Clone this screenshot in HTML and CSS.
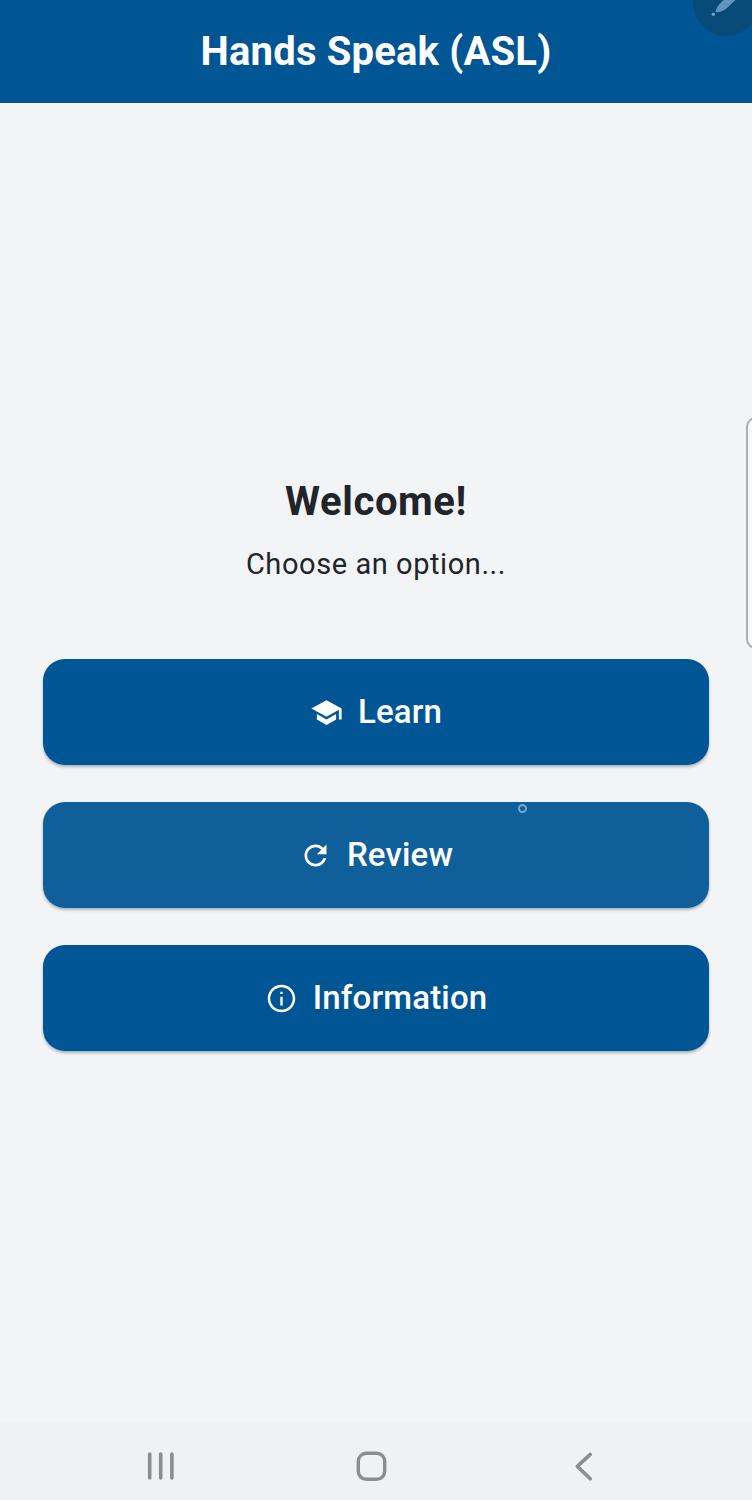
FILE: index.html
```html
<!DOCTYPE html>
<html lang="en">
<head>
<meta charset="utf-8">
<title>Hands Speak (ASL)</title>
<link rel="stylesheet" href="styles.css">
</head>
<body>
<div class="screen">
  <header class="app-bar"><h1 class="app-title">Hands Speak (ASL)</h1></header>
  <div class="edit-bubble">
    <svg viewBox="0 0 66 66"><path d="M22.5 42 Q23 37 29 31.500 L46 16 L54 19 L34 38 Q28 43 22.500 42Z" fill="#6095bf"/><circle cx="20.3" cy="44.2" r="1.6" fill="#6eabd3"/></svg>
  </div>
  <main class="content">
    <h2 class="welcome">Welcome!</h2>
    <p class="prompt">Choose an option...</p>
    <div class="actions">
      <button class="action">
        <svg class="icon" viewBox="0 0 24 24"><path d="M5 13.18v4L12 21l7-3.820v-4L12 17l-7-3.820zM12 3L1 9l11 6 9-4.910V17h2V9L12 3z"/></svg>
        <span>Learn</span>
      </button>
      <button class="action action-pressed">
        <svg class="icon" viewBox="0 0 24 24"><path d="M17.65 6.35C16.2 4.9 14.21 4 12 4c-4.42 0-7.99 3.58-7.99 8s3.57 8 7.99 8c3.73 0 6.84-2.55 7.73-6h-2.08c-.82 2.33-3.04 4-5.65 4-3.31 0-6-2.69-6-6s2.69-6 6-6c1.66 0 3.14.69 4.22 1.78L13 11h7V4l-2.35 2.35z"/></svg>
        <span>Review</span>
      </button>
      <button class="action">
        <svg class="icon" viewBox="0 0 24 24"><path d="M11.15 7h1.7v1.8h-1.7zm0 3.8h1.7v6.200h-1.7zM12 2C6.48 2 2 6.48 2 12s4.48 10 10 10 10-4.48 10-10S17.52 2 12 2zm0 18.200c-4.500 0-8.200-3.700-8.200-8.200s3.700-8.200 8.200-8.200 8.200 3.700 8.200 8.200-3.700 8.200-8.200 8.200z"/></svg>
        <span>Information</span>
      </button>
    </div>
  </main>
  <nav class="nav-bar">
    <svg class="nav-icon" viewBox="0 0 32 32"><path d="M5.7 4v24M16.7 4v24M27.9 4v24" stroke-width="3.6"/></svg>
    <svg class="nav-icon" viewBox="0 0 32 32"><rect x="2.3" y="3.3" width="26.4" height="26" rx="8" stroke-width="3.4"/></svg>
    <svg class="nav-icon" viewBox="0 0 32 32"><path d="M22.3 4.4L9.3 16.4L22.3 28.8" stroke-width="3.6"/></svg>
  </nav>
  <div class="edge-handle"></div>
  <div class="pointer"></div>
</div>
</body>
</html>
```
FILE: styles.css
```css
body { margin: 0; font-family: Roboto, sans-serif; }
.screen {
  position: relative;
  display: flex;
  flex-direction: column;
  height: 1500px;
  overflow: hidden;
  background: #f3f4f6;
  color: #212429;
}
.app-bar {
  box-sizing: border-box;
  height: 103px;
  padding-top: 28px;
  background: #005594;
  text-align: center;
}
.app-title { margin: 0; font-size: 40px; line-height: 47px; font-weight: 700; letter-spacing: 0.18px; color: #fff; }
.edit-bubble {
  position: absolute;
  top: -30px;
  right: -7px;
  width: 66px;
  height: 66px;
  border-radius: 50%;
  background: #084b78;
}
.edit-bubble svg { display: block; width: 66px; height: 66px; }
.content { flex: 1; padding: 375px 43px 0; text-align: center; }
.welcome { margin: 0; font-size: 40px; line-height: 48px; font-weight: 700; letter-spacing: 0.6px; }
.prompt { margin: 20px 0 0; font-size: 29px; line-height: 36px; letter-spacing: 0.57px; }
.actions { display: flex; flex-direction: column; gap: 37px; margin-top: 77px; }
.action {
  display: flex;
  align-items: center;
  justify-content: center;
  gap: 15px;
  height: 106px;
  padding: 0;
  border: 0;
  border-radius: 22px;
  background: #005594;
  box-shadow: 0 2px 3px rgba(0, 40, 80, 0.32);
  color: #fff;
  font: 500 33px/40px Roboto, sans-serif;
  letter-spacing: 0.17px;
}
.action-pressed { background: #0e5f9a; }
.icon { width: 33px; height: 33px; fill: #fff; }
.nav-bar {
  box-sizing: border-box;
  display: flex;
  justify-content: space-between;
  height: 78px;
  padding: 28px 152px 0 144px;
  background: #f0f1f3;
}
.nav-icon { width: 32px; height: 32px; fill: none; stroke: #8c8d8f; stroke-linecap: round; stroke-linejoin: round; }
.edge-handle {
  position: absolute;
  top: 417px;
  right: -24px;
  box-sizing: border-box;
  width: 30px;
  height: 232px;
  border: 2px solid #adaeb0;
  border-radius: 10px;
  background: #f8f9fb;
}
.pointer {
  position: absolute;
  top: 804px;
  left: 518px;
  box-sizing: border-box;
  width: 9px;
  height: 9px;
  border: 2px solid #74aad4;
  border-radius: 50%;
}
```
